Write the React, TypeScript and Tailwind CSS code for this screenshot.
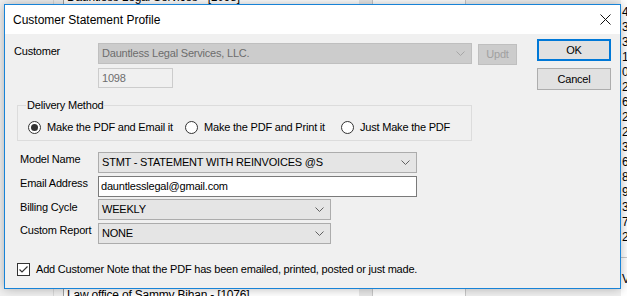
import React from "react";

const font = { fontFamily: '"Liberation Sans", Arial, sans-serif' };

function Chevron({ color = "#606060" }: { color?: string }) {
  return (
    <svg width="9" height="5" viewBox="0 0 9 5" className="shrink-0">
      <polyline points="0.5,0.5 4.5,4.5 8.5,0.5" fill="none" stroke={color} strokeWidth="1" />
    </svg>
  );
}

function Combo({ text, w, disabled = false }: { text: string; w: string; disabled?: boolean }) {
  return (
    <div
      className={
        "flex items-center justify-between h-[21px] pl-[3px] pr-[6px] border " +
        w +
        (disabled
          ? " bg-[#cccccc] border-[#bfbfbf] text-[#6d6d6d]"
          : " bg-[#e5e5e5] border-[#acacac] text-black")
      }
    >
      <span className="whitespace-nowrap">{text}</span>
      <Chevron color={disabled ? "#a6a6a6" : "#606060"} />
    </div>
  );
}

function Radio({ checked = false, label, w }: { checked?: boolean; label: string; w?: string }) {
  return (
    <div className={"flex items-center gap-[6px] " + (w ?? "")}>
      <div className="w-[13px] h-[13px] rounded-full border border-[#333333] bg-white flex items-center justify-center shrink-0">
        {checked && <div className="w-[7px] h-[7px] rounded-full bg-[#333333]" />}
      </div>
      <span className="whitespace-nowrap leading-[13px]">{label}</span>
    </div>
  );
}

const digits = ["4", "3", "3", "1", "0", "2", "6", "2", "2", "3", "6", "8", "9", "3", "7", "2"];

export default function App() {
  return (
    <div
      className="relative w-[627px] h-[296px] overflow-hidden bg-[#f0f0f0] text-[11px] tracking-[-0.2px] text-black"
      style={font}
    >
      {/* background window */}
      <div className="flex h-full">
        <div className="w-[54px] h-full bg-[#f0f0f0] border-r border-[#d9d9d9]" />
        <div className="w-[10px] h-full bg-[#f0f0f0] border-r border-[#a0a0a0]" />
        <div className="w-[295px] h-full bg-white flex flex-col justify-between pl-[3px] text-[12px]">
          <span className="mt-[-12px] whitespace-nowrap">Dauntless Legal Services - [1098]</span>
          <span className="mb-[-8px] whitespace-nowrap">Law office of Sammy Bihan - [1076]</span>
        </div>
        <div className="w-[14px] h-full bg-[#e8e8e8] border-r border-[#c8c8c8]" />
        <div className="w-[93px] h-full bg-white border-r border-[#c8c8c8]" />
        <div className="flex-1 h-full bg-[#f0f0f0]" />
        <div className="w-[6px] h-full bg-white flex flex-col pt-[5px] text-[12px] leading-[15px] overflow-hidden">
          {digits.map((d, i) => (
            <span key={i} className="pl-[1px]">{d}</span>
          ))}
          <div className="mt-[12px] border-t border-[#c8c8c8] h-[18px] pl-[1px] pt-[14px]">Va</div>
        </div>
      </div>

      {/* dialog */}
      <div className="absolute left-[4px] top-[4px] w-[617px] h-[285px] border border-[#1883d7] bg-[#f0f0f0] flex flex-col shadow-[0_0_10px_rgba(0,0,0,0.28)]">
        <div className="h-[29px] bg-white flex items-center justify-between pl-[8px] pr-[9px] shrink-0">
          <span className="text-[12px] tracking-normal">Customer Statement Profile</span>
          <svg width="11" height="11" viewBox="0 0 11 11">
            <line x1="0.5" y1="0.5" x2="10.5" y2="10.5" stroke="#111" strokeWidth="1" />
            <line x1="10.5" y1="0.5" x2="0.5" y2="10.5" stroke="#111" strokeWidth="1" />
          </svg>
        </div>

        <div className="flex flex-col">
          {/* top section */}
          <div className="flex items-start">
            <div className="ml-[9px] mt-[9px] flex flex-col">
              <div className="flex items-start">
                <span className="w-[84px] pt-[2px] leading-[13px]">Customer</span>
                <Combo text="Dauntless Legal Services, LLC." w="w-[374px]" disabled />
                <div className="ml-[6px] mt-[1px] w-[39px] h-[21px] bg-[#cccccc] border border-[#bfbfbf] text-[#a0a0a0] flex items-center justify-center">
                  Updt
                </div>
              </div>
              <div className="ml-[84px] mt-[3px] w-[75px] h-[20px] bg-[#f0f0f0] border border-[#cccccc] text-[#6d6d6d] flex items-center pl-[3px]">
                1098
              </div>
            </div>
            <div className="ml-[20px] mt-[5px] flex flex-col gap-[7px]">
              <div className="w-[74px] h-[22px] bg-[#e1e1e1] border-2 border-[#0078d7] flex items-center justify-center">
                OK
              </div>
              <div className="w-[74px] h-[22px] bg-[#e1e1e1] border border-[#adadad] flex items-center justify-center">
                Cancel
              </div>
            </div>
          </div>

          {/* delivery method group */}
          <div className="relative ml-[12px] mt-[15px] w-[455px] h-[36px] border border-[#dcdcdc]">
            <span className="absolute -top-[7px] left-[8px] px-[1px] bg-[#f0f0f0] leading-[13px]">
              Delivery Method
            </span>
            <div className="flex items-center mt-[15px] pl-[10px]">
              <Radio checked label="Make the PDF and Email it" w="w-[157px]" />
              <Radio label="Make the PDF and Print it" w="w-[156px]" />
              <Radio label="Just Make the PDF" />
            </div>
          </div>

          {/* form rows */}
          <div className="ml-[15px] mt-[11px] flex flex-col">
            <div className="flex items-start">
              <span className="w-[78px] pt-[1px] leading-[13px]">Model Name</span>
              <Combo text="STMT - STATEMENT WITH REINVOICES @S" w="w-[319px]" />
            </div>
            <div className="flex items-start mt-[3px]">
              <span className="w-[78px] pt-[1px] leading-[13px]">Email Address</span>
              <div className="w-[319px] h-[21px] bg-white border border-[#7a7a7a] flex items-center pl-[2px]">
                dauntlesslegal@gmail.com
              </div>
            </div>
            <div className="flex items-start mt-[2px]">
              <span className="w-[78px] pt-[2px] leading-[13px]">Billing Cycle</span>
              <Combo text="WEEKLY" w="w-[233px]" />
            </div>
            <div className="flex items-start mt-[3px]">
              <span className="w-[78px] pt-[1px] leading-[13px]">Custom Report</span>
              <Combo text="NONE" w="w-[233px]" />
            </div>
          </div>

          {/* checkbox */}
          <div className="ml-[12px] mt-[19px] flex items-center gap-[6px]">
            <div className="w-[13px] h-[13px] border border-[#333333] bg-white flex items-center justify-center shrink-0">
              <svg width="11" height="11" viewBox="0 0 11 11">
                <polyline points="1.5,5.5 4,8 9.5,2.5" fill="none" stroke="#333" strokeWidth="1.2" />
              </svg>
            </div>
            <span className="whitespace-nowrap leading-[13px]">
              Add Customer Note that the PDF has been emailed, printed, posted or just made.
            </span>
          </div>
        </div>
      </div>
    </div>
  );
}
